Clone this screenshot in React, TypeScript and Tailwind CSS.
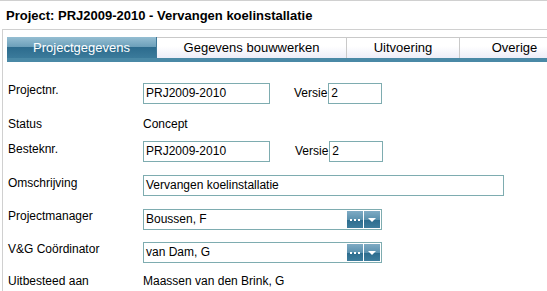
import React from "react";

function Field({ w, children, className = "" }: { w: string; children?: React.ReactNode; className?: string }) {
  return (
    <div className={`${w} h-[21px] border border-[#7eacb0] bg-white pl-[2px] flex items-center leading-[19px] whitespace-nowrap ${className}`}>
      {children}
    </div>
  );
}

function PickButtons() {
  const btn =
    "w-[16px] h-[17px] flex items-center justify-center bg-[linear-gradient(to_bottom,#7fabc4_0%,#5b91ae_50%,#2c6b8d_50%,#3e7d9d_100%)]";
  return (
    <div className="ml-auto flex gap-[1px] pr-[1px]">
      <div className={btn}>
        <svg width="10" height="2" viewBox="0 0 10 2">
          <rect x="0" y="0" width="2" height="2" fill="#fff" />
          <rect x="4" y="0" width="2" height="2" fill="#fff" />
          <rect x="8" y="0" width="2" height="2" fill="#fff" />
        </svg>
      </div>
      <div className={btn}>
        <svg width="8" height="4" viewBox="0 0 8 4">
          <polygon points="0,0 8,0 4,4" fill="#fff" />
        </svg>
      </div>
    </div>
  );
}

export default function App() {
  const label = "w-[135px] shrink-0 leading-[14px]";
  return (
    <div className="w-[547px] h-[291px] overflow-hidden bg-white text-black text-[12px] font-['Liberation_Sans',Arial,sans-serif]">
      <div className="h-[29px] border-t border-[#d0d0d0] pl-[6px] pt-[7px] text-[13px] leading-[15px] font-bold whitespace-nowrap">
        Project: PRJ2009-2010 - Vervangen koelinstallatie
      </div>
      <div className="ml-[2px] h-[262px] border-l border-t border-[#d0d0d0]">
        {/* tabs */}
        <div className="pl-[4px] pt-[7px] overflow-hidden">
          <div className="flex h-[21px] text-[13px] whitespace-nowrap">
            <div className="w-[150px] shrink-0 text-center text-white leading-[19px] pt-[1px] border-r border-[#3f7897] bg-[linear-gradient(to_bottom,#95bed2_0%,#6b9fb9_48%,#2c6b8d_48%,#3b7b9b_100%)]">
              Projectgegevens
            </div>
            <div className="w-[189px] shrink-0 text-center leading-[19px] border-t border-[#c9c9c9] bg-[linear-gradient(to_bottom,#ffffff_0%,#ffffff_40%,#ededf8_100%)]">
              Gegevens bouwwerken
            </div>
            <div className="w-[113px] shrink-0 text-center leading-[19px] border-t border-l border-[#c9c9c9] bg-[linear-gradient(to_bottom,#ffffff_0%,#ffffff_40%,#ededf8_100%)]">
              Uitvoering
            </div>
            <div className="w-[110px] shrink-0 text-center leading-[19px] border-t border-l border-[#c9c9c9] bg-[linear-gradient(to_bottom,#ffffff_0%,#ffffff_40%,#ededf8_100%)]">
              Overige
            </div>
          </div>
          <div className="h-[4px] bg-[#4a89a6]" />
        </div>

        {/* form */}
        <div className="pl-[5px] flex flex-col">
          <div className="mt-[21px] flex h-[21px]">
            <div className={label}>Projectnr.</div>
            <Field w="w-[127px]">PRJ2009-2010</Field>
            <div className="ml-[24px] mr-[1px] leading-[21px]">Versie</div>
            <Field w="w-[54px]">2</Field>
          </div>
          <div className="mt-[13px] flex h-[14px]">
            <div className={label}>Status</div>
            <div className="leading-[14px]">Concept</div>
          </div>
          <div className="mt-[10px] flex h-[21px]">
            <div className={`${label} pt-[1px]`}>Besteknr.</div>
            <Field w="w-[127px]">PRJ2009-2010</Field>
            <div className="ml-[25px] mr-[1px] leading-[21px]">Versie</div>
            <Field w="w-[54px]">2</Field>
          </div>
          <div className="mt-[13px] flex h-[21px]">
            <div className={`${label} pt-[1px]`}>Omschrijving</div>
            <Field w="w-[361px]">Vervangen koelinstallatie</Field>
          </div>
          <div className="mt-[13px] flex h-[21px]">
            <div className={label}>Projectmanager</div>
            <Field w="w-[239px]">
              <span>Boussen, F</span>
              <PickButtons />
            </Field>
          </div>
          <div className="mt-[12px] flex h-[21px]">
            <div className={label}>V&amp;G Coördinator</div>
            <Field w="w-[239px]">
              <span>van Dam, G</span>
              <PickButtons />
            </Field>
          </div>
          <div className="mt-[11px] flex h-[14px]">
            <div className={label}>Uitbesteed aan</div>
            <div className="leading-[14px] whitespace-nowrap">Maassen van den Brink, G</div>
          </div>
        </div>
      </div>
    </div>
  );
}
